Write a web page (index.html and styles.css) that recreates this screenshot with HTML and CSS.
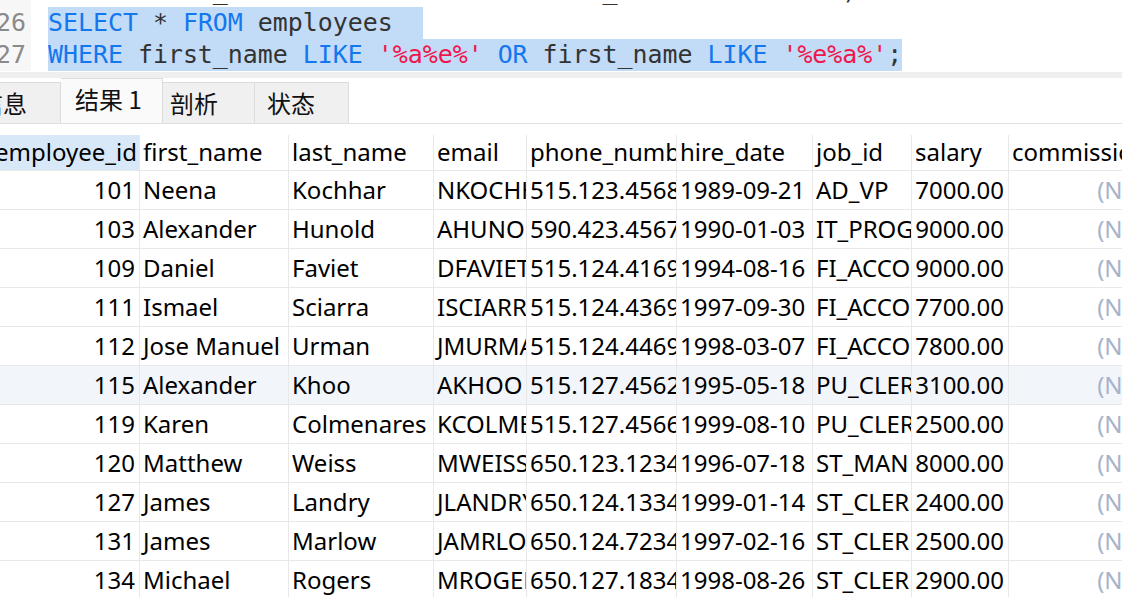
FILE: index.html
```html
<!DOCTYPE html>
<html lang="zh">
<head>
<meta charset="utf-8">
<title>查询结果</title>
<link rel="stylesheet" href="styles.css">
</head>
<body>
<div class="editor">
  <div class="code">
    <div class="line"><span class="ln">25</span><span class="src">   <span class="kw">AND</span> last_name &lt;&gt; <span class="str">'Hal'</span> <span class="kw">AND</span> created_at <span class="kw">IS NOT NULL</span> )</span></div>
    <div class="line"><span class="ln">26</span><span class="src sel"><span class="kw">SELECT</span> * <span class="kw">FROM</span> employees  </span></div>
    <div class="line"><span class="ln">27</span><span class="src sel"><span class="kw">WHERE</span> first_name <span class="kw">LIKE</span> <span class="str">'%a%e%'</span> <span class="kw">OR</span> first_name <span class="kw">LIKE</span> <span class="str">'%e%a%'</span>;</span></div>
  </div>
</div>
<div class="band"></div>
<div class="tabs">
  <div class="tab tab-first">信息</div>
  <div class="tab tab-active">结果 1</div>
  <div class="tab tab-profile">剖析</div>
  <div class="tab tab-status">状态</div>
</div>
<div class="grid-wrap">
  <div class="grid">
    <div class="row head">
      <div class="cell sel-head">employee_id</div>
      <div class="cell">first_name</div>
      <div class="cell">last_name</div>
      <div class="cell">email</div>
      <div class="cell">phone_number</div>
      <div class="cell">hire_date</div>
      <div class="cell">job_id</div>
      <div class="cell">salary</div>
      <div class="cell">commission_pct</div>
    </div>
    <div class="row"><div class="cell num">101</div><div class="cell">Neena</div><div class="cell">Kochhar</div><div class="cell">NKOCHHAR</div><div class="cell">515.123.4568</div><div class="cell">1989-09-21</div><div class="cell">AD_VP</div><div class="cell num">17000.00</div><div class="cell num null">(Null)</div></div>
    <div class="row"><div class="cell num">103</div><div class="cell">Alexander</div><div class="cell">Hunold</div><div class="cell">AHUNOLD</div><div class="cell">590.423.4567</div><div class="cell">1990-01-03</div><div class="cell">IT_PROG</div><div class="cell num">9000.00</div><div class="cell num null">(Null)</div></div>
    <div class="row"><div class="cell num">109</div><div class="cell">Daniel</div><div class="cell">Faviet</div><div class="cell">DFAVIET</div><div class="cell">515.124.4169</div><div class="cell">1994-08-16</div><div class="cell">FI_ACCOUNT</div><div class="cell num">9000.00</div><div class="cell num null">(Null)</div></div>
    <div class="row"><div class="cell num">111</div><div class="cell">Ismael</div><div class="cell">Sciarra</div><div class="cell">ISCIARRA</div><div class="cell">515.124.4369</div><div class="cell">1997-09-30</div><div class="cell">FI_ACCOUNT</div><div class="cell num">7700.00</div><div class="cell num null">(Null)</div></div>
    <div class="row"><div class="cell num">112</div><div class="cell">Jose Manuel</div><div class="cell">Urman</div><div class="cell">JMURMAN</div><div class="cell">515.124.4469</div><div class="cell">1998-03-07</div><div class="cell">FI_ACCOUNT</div><div class="cell num">7800.00</div><div class="cell num null">(Null)</div></div>
    <div class="row hl"><div class="cell num">115</div><div class="cell">Alexander</div><div class="cell">Khoo</div><div class="cell">AKHOO</div><div class="cell">515.127.4562</div><div class="cell">1995-05-18</div><div class="cell">PU_CLERK</div><div class="cell num">3100.00</div><div class="cell num null">(Null)</div></div>
    <div class="row"><div class="cell num">119</div><div class="cell">Karen</div><div class="cell">Colmenares</div><div class="cell">KCOLMENA</div><div class="cell">515.127.4566</div><div class="cell">1999-08-10</div><div class="cell">PU_CLERK</div><div class="cell num">2500.00</div><div class="cell num null">(Null)</div></div>
    <div class="row"><div class="cell num">120</div><div class="cell">Matthew</div><div class="cell">Weiss</div><div class="cell">MWEISS</div><div class="cell">650.123.1234</div><div class="cell">1996-07-18</div><div class="cell">ST_MAN</div><div class="cell num">8000.00</div><div class="cell num null">(Null)</div></div>
    <div class="row"><div class="cell num">127</div><div class="cell">James</div><div class="cell">Landry</div><div class="cell">JLANDRY</div><div class="cell">650.124.1334</div><div class="cell">1999-01-14</div><div class="cell">ST_CLERK</div><div class="cell num">2400.00</div><div class="cell num null">(Null)</div></div>
    <div class="row"><div class="cell num">131</div><div class="cell">James</div><div class="cell">Marlow</div><div class="cell">JAMRLOW</div><div class="cell">650.124.7234</div><div class="cell">1997-02-16</div><div class="cell">ST_CLERK</div><div class="cell num">2500.00</div><div class="cell num null">(Null)</div></div>
    <div class="row"><div class="cell num">134</div><div class="cell">Michael</div><div class="cell">Rogers</div><div class="cell">MROGERS</div><div class="cell">650.127.1834</div><div class="cell">1998-08-26</div><div class="cell">ST_CLERK</div><div class="cell num">2900.00</div><div class="cell num null">(Null)</div></div>
  </div>
</div>
</body>
</html>
```

FILE: styles.css
```css
* { box-sizing: border-box; }
html, body {
  margin: 0;
  padding: 0;
  width: 1122px;
  height: 597px;
  overflow: hidden;
  background: #ffffff;
}
body {
  font-family: "Noto Sans", "Noto Sans CJK SC", sans-serif;
  color: #000;
}

/* ---------- SQL editor ---------- */
.editor {
  height: 72px;
  overflow: hidden;
  background: #fff;
}
.code {
  margin-top: -25px;
  font-family: "DejaVu Sans Mono", monospace;
  font-size: 24.9px;
  line-height: 32px;
  color: #333;
}
.line {
  display: flex;
  height: 32px;
}
.ln {
  flex: 0 0 31px;
  width: 31px;
  padding-right: 5px;
  text-align: right;
  background: #f7f7f7;
  color: #8a8a8a;
  overflow: hidden;
  white-space: nowrap;
  direction: rtl;
}
.src {
  display: inline-block;
  height: 32px;
  margin-left: 17px;
  white-space: pre;
}
.src.sel { background: #c2dbf6; }
.kw { color: #1477ee; }
.str { color: #f0164c; }

/* ---------- band + tabs ---------- */
.band {
  height: 6px;
  background: #efefef;
}
.tabs {
  display: flex;
  align-items: flex-end;
  height: 46px;
  border-bottom: 1px solid #e0e0e0;
  overflow: hidden;
  font-family: "Noto Sans CJK SC", "Noto Sans", sans-serif;
  font-size: 24px;
  color: #111;
}
.tab {
  flex: 0 0 auto;
  height: 41px;
  display: flex;
  align-items: center;
  background: #f0f0f0;
  border-top: 1px solid #dcdcdc;
  border-right: 1px solid #dcdcdc;
  white-space: nowrap;
  padding-bottom: 2px;
}
.tab-first {
  width: 91px;
  margin-left: -30px;
  padding-left: 9px;
}
.tab-active {
  width: 102px;
  height: 45px;
  background: #fafafa;
  padding-left: 14px;
  padding-bottom: 6px;
}
.tab-profile {
  width: 92px;
  padding-left: 7px;
}
.tab-status {
  width: 94px;
  padding-left: 12px;
}

/* ---------- result grid ---------- */
.grid-wrap {
  margin-top: 11px;
  overflow: hidden;
  width: 1122px;
}
.grid {
  margin-left: -8px;
  width: 1200px;
  font-size: 24px;
}
.row {
  display: grid;
  grid-template-columns: 148px 149px 145px 93px 150px 136px 99px 97px 153px;
  height: 39px;
  border-bottom: 1px solid #e8e8e8;
}
.row.head {
  height: 36px;
}
.row.hl { background: #f2f6fb; }
.cell {
  display: flex;
  align-items: center;
  border-right: 1px solid #e8e8e8;
  padding: 0 3px 2px 3px;
  overflow: hidden;
  white-space: nowrap;
}
.cell.num {
  justify-content: flex-end;
  padding-right: 4px;
}
.cell.sel-head { background: #d8e8f8; }
.cell.null { color: #a6b3c9; }
```
